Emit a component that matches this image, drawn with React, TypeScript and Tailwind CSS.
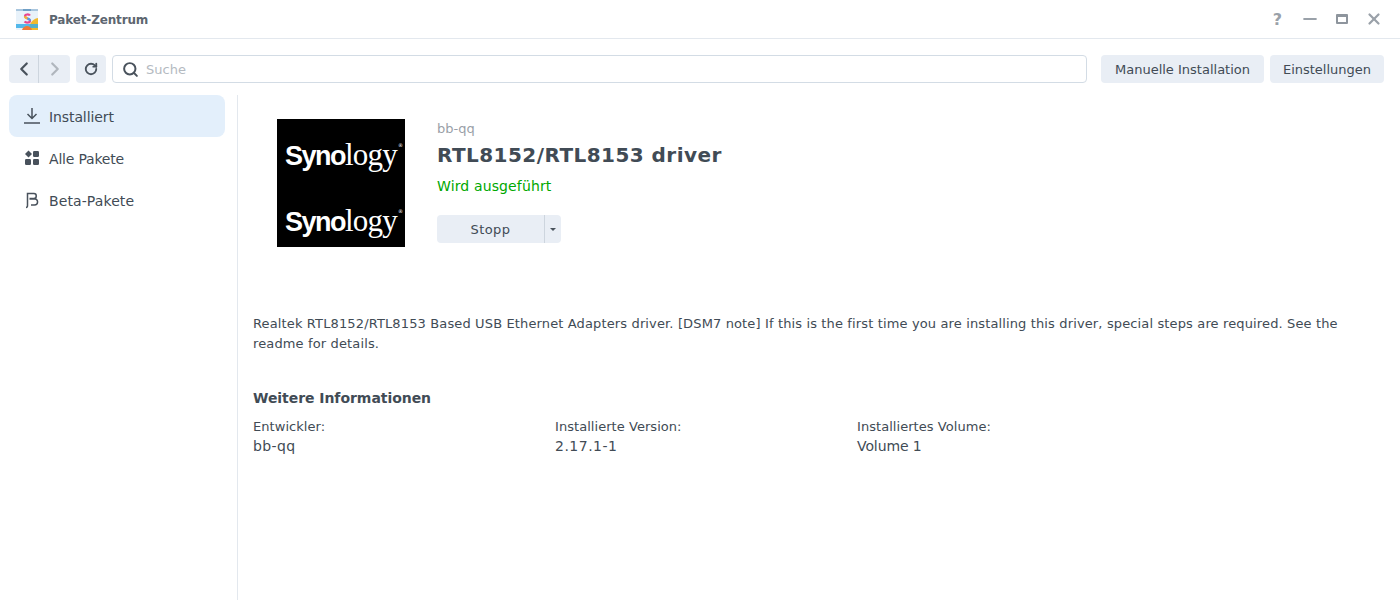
import { ChevronLeft, ChevronRight, Minus, RotateCw, Search, X } from 'lucide-react';

const font = { fontFamily: '"DejaVu Sans", sans-serif' };

function AppIcon() {
  return (
    <svg width="24" height="24" viewBox="0 0 24 24" className="mt-px">
      <rect x="1" y="2" width="22" height="20" rx="1" fill="#e8f2fa" />
      <rect x="1" y="1" width="22" height="2" fill="#a9c6de" />
      <rect x="8" y="1" width="8" height="2" fill="#6f9fc6" />
      <path d="M14 22c0-6 3-11 9-12v12z" fill="#f0b92c" />
      <rect x="1" y="16" width="22" height="4" fill="#38aee6" opacity="0.85" />
      <path d="M7 22c1-3 3-4 5-4s4 1 5 4z" fill="#ef7a35" />
      <path d="M15 7.500c-1-1.500-5-1.500-5 .8 0 2.600 5 1.700 5 4.400 0 2.300-4 2.300-5.500.8" fill="none" stroke="#e8458f" strokeWidth="2.200" />
      <path d="M10 8.300c0 1.300 1.300 1.800 2.500 2.200" fill="none" stroke="#f2b632" strokeWidth="2.200" />
      <path d="M12.500 10.500c1.200.4 2.500.9 2.500 2.200" fill="none" stroke="#4aa3e8" strokeWidth="2.200" />
    </svg>
  );
}

function Logo() {
  return (
    <div className="flex items-baseline leading-none text-white">
      <span className="text-[27px] font-bold tracking-[-1.5px]" style={{ fontFamily: '"Liberation Sans", sans-serif' }}>Syno</span>
      <span className="text-[31px] tracking-[-0.8px]" style={{ fontFamily: '"Liberation Serif", serif' }}>logy</span>
      <span className="ml-px mt-1 self-start text-[5px]">®</span>
    </div>
  );
}

function NavItem({ icon, label, active, labelClass }: { icon: React.ReactNode; label: string; active?: boolean; labelClass?: string }) {
  return (
    <div className={`flex h-[42px] items-center rounded-lg pl-[14px] text-[14px] text-[#414b55] ${active ? 'bg-[#e3effb]' : ''}`}>
      <span className="flex w-[26px] shrink-0">{icon}</span>
      <span className={`pt-[2px] ${labelClass ?? ''}`}>{label}</span>
    </div>
  );
}

function InfoCol({ label, value, valueClass }: { label: string; value: string; valueClass?: string }) {
  return (
    <div className="w-[302px]">
      <div className="h-[19px] text-[13px] leading-[20px] tracking-[0.05px]">{label}</div>
      <div className={`text-[14px] leading-[20px] ${valueClass ?? ''}`}>{value}</div>
    </div>
  );
}

export default function App() {
  return (
    <div className="flex h-[600px] w-[1400px] flex-col overflow-hidden bg-white text-[#414b55]" style={font}>
      <header className="flex h-[39px] shrink-0 items-center border-b border-[#e3e8ee] pl-[15px] pr-[17px]">
        <AppIcon />
        <span className="ml-[10px] pt-px text-[12px] font-bold tracking-[-0.15px] text-[#5d6670]">Paket-Zentrum</span>
        <div className="ml-auto flex items-center text-[#9aa1a9]">
          <span className="w-[13px] pt-px text-center text-[16px] font-bold leading-none">?</span>
          <Minus size={20} strokeWidth={2.500} className="ml-[16px]" />
          <div className="ml-[16px] h-[10px] w-[12px] rounded-[1px] border-2 border-t-[3px] border-[#8e959d]" />
          <X size={18} strokeWidth={3} className="ml-[17px]" />
        </div>
      </header>

      <div className="flex h-[56px] shrink-0 items-start pl-[9px] pr-4 pt-4">
        <div className="flex h-[28px] w-[61px] items-center rounded bg-[#e9eef5]">
          <div className="flex h-full w-[30px] items-center justify-center border-r border-[#cdd5de]">
            <ChevronLeft size={22} strokeWidth={2.400} className="text-[#49525c]" />
          </div>
          <div className="flex flex-1 items-center justify-center">
            <ChevronRight size={22} strokeWidth={2.400} className="text-[#b0b6bd]" />
          </div>
        </div>
        <div className="ml-[6px] flex h-[28px] w-[30px] items-center justify-center rounded bg-[#e9eef5]">
          <RotateCw size={14} strokeWidth={3.200} className="text-[#49525c]" />
        </div>
        <div className="ml-[6px] flex h-[28px] w-[975px] items-center rounded border border-[#d3dce5] pl-[9px]">
          <Search size={17} strokeWidth={2.800} className="text-[#49525c]" />
          <span className="ml-[7px] pt-[2px] text-[13px] text-[#b4bac1]">Suche</span>
        </div>
        <button className="ml-[14px] h-[28px] w-[163px] rounded bg-[#e9eef5] pt-px text-[13px] text-[#414b55]">Manuelle Installation</button>
        <button className="ml-[6px] h-[28px] w-[114px] rounded bg-[#e9eef5] pt-px text-[13px] text-[#414b55]">Einstellungen</button>
      </div>

      <div className="flex min-h-0 flex-1">
        <aside className="w-[238px] shrink-0 border-r border-[#e3e8ee] pl-[9px] pr-[12px]">
          <NavItem
            active
            label="Installiert"
            labelClass="tracking-[-0.1px]"
            icon={
              <svg width="18" height="18" viewBox="0 0 18 18" fill="none" stroke="#49525c" strokeWidth="1.500">
                <path d="M9 1v10M4.500 7l4.500 4.500L13.500 7M1 16h16" />
              </svg>
            }
          />
          <NavItem
            label="Alle Pakete"
            labelClass="tracking-[-0.2px]"
            icon={
              <svg width="18" height="18" viewBox="0 0 18 18" fill="#49525c">
                <path d="M5.500 1.500 9 5l-3.500 3.500L2 5z" />
                <rect x="10" y="2" width="6" height="6" rx="1.200" />
                <rect x="2" y="10" width="6" height="6" rx="1.200" />
                <rect x="10" y="10" width="6" height="6" rx="1.200" />
              </svg>
            }
          />
          <NavItem
            label="Beta-Pakete"
            labelClass="tracking-[0.1px]"
            icon={
              <svg width="18" height="18" viewBox="0 0 18 18" fill="none" stroke="#49525c" strokeWidth="1.500">
                <path d="M4.500 14.500V2.500h6.500c3 0 3 5 0 5H6.500M6.500 8H12c3.500 0 3.500 6-.5 6H8M4.500 14.500c0 1.500-.5 2-1.500 2" />
              </svg>
            }
          />
        </aside>

        <main className="min-w-0 flex-1 pl-[15px] pr-[60px] pt-[24px]">
          <div className="flex pl-[24px]">
            <div className="flex h-[128px] w-[128px] flex-col items-center justify-center gap-[35px] bg-black pt-[8px] pl-[6px]">
              <Logo />
              <Logo />
            </div>
            <div className="ml-[32px]">
              <div className="text-[13px] leading-[20px] text-[#9a9fa8]">bb-qq</div>
              <h1 className="mt-px text-[20px] font-bold leading-[30px] tracking-[0.45px] text-[#414b55]">RTL8152/RTL8153 driver</h1>
              <div className="mt-[6px] text-[14px] leading-[20px] tracking-[0.13px] text-[#00a800]">Wird ausgeführt</div>
              <div className="mt-[19px] flex h-[28px] w-[124px] rounded bg-[#e9eef5] text-[13px]">
                <div className="flex w-[108px] items-center justify-center border-r border-[#cdd5de] pt-px tracking-[0.4px]">Stopp</div>
                <div className="flex flex-1 items-center justify-center">
                  <div className="h-0 w-0 border-x-[3.500px] border-t-[3.500px] border-x-transparent border-t-[#49525c]" />
                </div>
              </div>
            </div>
          </div>

          <p className="mt-[67px] w-[1100px] text-[13px] leading-[20px] tracking-[0.135px]">
            Realtek RTL8152/RTL8153 Based USB Ethernet Adapters driver. [DSM7 note] If this is the first time you are installing this driver, special steps are required. See the readme for details.
          </p>

          <h2 className="mt-[34px] text-[14px] font-bold leading-[20px] tracking-[-0.05px]">Weitere Informationen</h2>
          <div className="mt-[9px] flex">
            <InfoCol label="Entwickler:" value="bb-qq" valueClass="tracking-[0.4px]" />
            <InfoCol label="Installierte Version:" value="2.17.1-1" valueClass="tracking-[0.5px]" />
            <InfoCol label="Installiertes Volume:" value="Volume 1" valueClass="tracking-[-0.1px]" />
          </div>
        </main>
      </div>
    </div>
  );
}
